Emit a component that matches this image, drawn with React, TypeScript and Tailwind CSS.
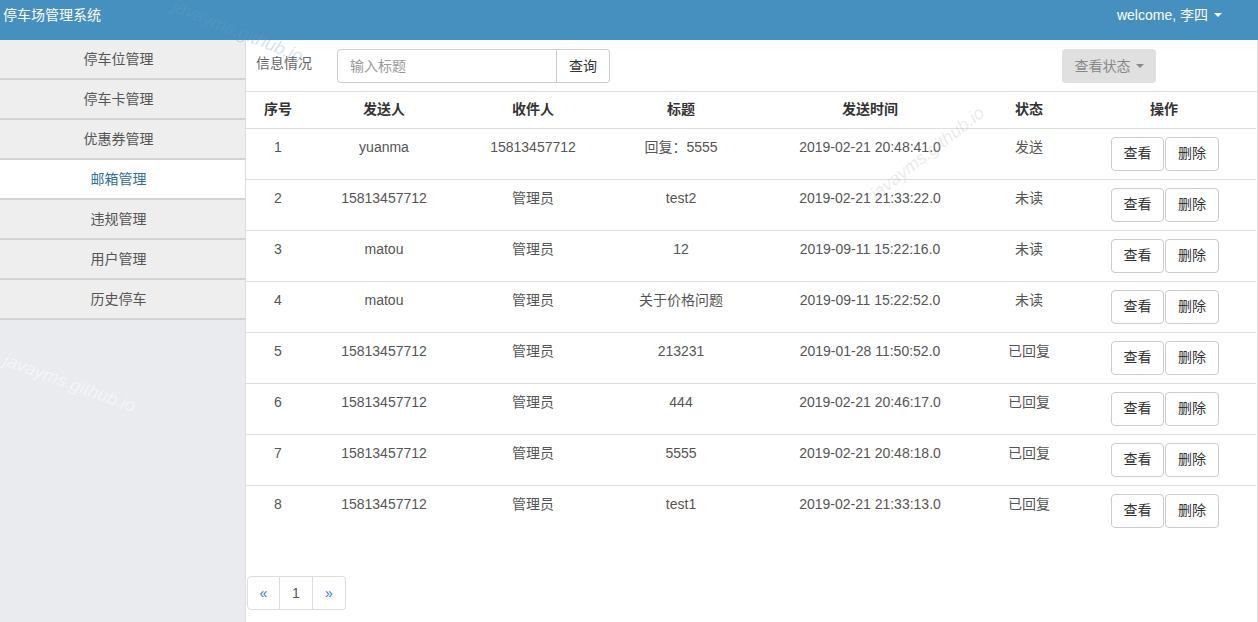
import { useState } from "react";

const MENU = ["停车位管理", "停车卡管理", "优惠券管理", "邮箱管理", "违规管理", "用户管理", "历史停车"];

const ROWS = [
  { id: 1, from: "yuanma", to: "15813457712", title: "回复：5555", time: "2019-02-21 20:48:41.0", status: "发送" },
  { id: 2, from: "15813457712", to: "管理员", title: "test2", time: "2019-02-21 21:33:22.0", status: "未读" },
  { id: 3, from: "matou", to: "管理员", title: "12", time: "2019-09-11 15:22:16.0", status: "未读" },
  { id: 4, from: "matou", to: "管理员", title: "关于价格问题", time: "2019-09-11 15:22:52.0", status: "未读" },
  { id: 5, from: "15813457712", to: "管理员", title: "213231", time: "2019-01-28 11:50:52.0", status: "已回复" },
  { id: 6, from: "15813457712", to: "管理员", title: "444", time: "2019-02-21 20:46:17.0", status: "已回复" },
  { id: 7, from: "15813457712", to: "管理员", title: "5555", time: "2019-02-21 20:48:18.0", status: "已回复" },
  { id: 8, from: "15813457712", to: "管理员", title: "test1", time: "2019-02-21 21:33:13.0", status: "已回复" },
];

const Caret = ({ className = "" }: { className?: string }) => (
  <span
    className={`inline-block w-0 h-0 border-l-[4px] border-r-[4px] border-t-[4px] border-l-transparent border-r-transparent ${className}`}
  />
);

const Sidebar = () => {
  const [active, setActive] = useState(3);
  return (
    <aside className="w-[245px] shrink-0 bg-[#e9ebee]">
      {MENU.map((m, i) => (
        <div
          key={m}
          onClick={() => setActive(i)}
          className={`h-10 flex items-center justify-center pr-2 border-b-2 border-[#d3d3d3] cursor-pointer ${
            i === active ? "bg-white text-[#2f6f9f]" : "bg-[#eeeeee] text-[#555]"
          }`}
        >
          {m}
        </div>
      ))}
    </aside>
  );
};

const Toolbar = () => (
  <div className="h-[52px] flex items-start border-b border-[#ddd] pl-[10px] pt-[9px] pr-[101px]">
    <span className="text-[#666] mt-[4px] w-[81px]">信息情况</span>
    <div className="flex">
      <input
        placeholder="输入标题"
        className="w-[220px] h-[34px] border border-[#ccc] rounded-l-[4px] px-3 text-[14px] text-[#555] placeholder:text-[#999] outline-none"
      />
      <button className="w-[53px] h-[34px] border border-l-0 border-[#ccc] rounded-r-[4px] bg-white text-[#333]">
        查询
      </button>
    </div>
    <button className="ml-auto w-[94px] h-[34px] rounded-[4px] bg-[#e0e0e0] text-[#888] flex items-center justify-center gap-[5px]">
      查看状态
      <Caret className="border-t-[#888]" />
    </button>
  </div>
);

const MailTable = () => (
  <table className="w-[1010px] border-collapse table-fixed">
    <colgroup>
      <col className="w-[64px]" />
      <col className="w-[148px]" />
      <col className="w-[150px]" />
      <col className="w-[146px]" />
      <col className="w-[232px]" />
      <col className="w-[86px]" />
      <col className="w-[184px]" />
    </colgroup>
    <thead>
      <tr className="h-[36px] text-[#333] font-bold">
        {["序号", "发送人", "收件人", "标题", "发送时间", "状态", "操作"].map((h) => (
          <th key={h} className="text-center align-middle font-bold">
            {h}
          </th>
        ))}
      </tr>
    </thead>
    <tbody>
      {ROWS.map((r) => (
        <tr key={r.id} className="h-[51px] border-t border-[#ddd] text-[#555]">
          <td className="text-center align-top pt-[8px] leading-5">{r.id}</td>
          <td className="text-center align-top pt-[8px] leading-5">{r.from}</td>
          <td className="text-center align-top pt-[8px] leading-5">{r.to}</td>
          <td className="text-center align-top pt-[8px] leading-5">{r.title}</td>
          <td className="text-center align-top pt-[8px] leading-5">{r.time}</td>
          <td className="text-center align-top pt-[8px] leading-5">{r.status}</td>
          <td className="align-top pt-[8px]">
            <div className="flex justify-center gap-px pl-[2px]">
              <button className="w-[53px] h-[34px] border border-[#ccc] rounded-[4px] bg-white text-[#333]">查看</button>
              <button className="w-[54px] h-[34px] border border-[#ccc] rounded-[4px] bg-white text-[#333]">删除</button>
            </div>
          </td>
        </tr>
      ))}
    </tbody>
  </table>
);

const Pager = () => (
  <div className="flex mt-[40px] ml-px">
    <span className="w-[33px] h-[34px] border border-[#ddd] rounded-l-[4px] flex items-center justify-center text-[#337ab7]">«</span>
    <span className="w-[33px] h-[34px] border border-l-0 border-[#ddd] flex items-center justify-center text-[#555]">1</span>
    <span className="w-[33px] h-[34px] border border-l-0 border-[#ddd] rounded-r-[4px] flex items-center justify-center text-[#337ab7]">»</span>
  </div>
);

const App = () => (
  <div
    className="relative w-[1258px] h-[622px] overflow-hidden bg-white text-[14px]"
    style={{ fontFamily: '"Liberation Sans", "Noto Sans CJK SC", sans-serif' }}
  >
    <header className="h-10 bg-[#4590bf] text-white flex items-center justify-between pl-[3px] pr-[36px]">
      <span className="-mt-[10px]">停车场管理系统</span>
      <span className="flex items-center gap-[6px] -mt-[10px]">
        welcome, 李四
        <Caret className="border-t-white" />
      </span>
    </header>
    <div className="flex h-[582px]">
      <Sidebar />
      <main className="flex-1 border-l border-r border-[#ddd]">
        <Toolbar />
        <MailTable />
        <Pager />
      </main>
    </div>

    {/* faint watermarks */}
    <span className="absolute left-[168px] top-[18px] rotate-[22deg] text-[18px] italic text-[#6a9ec4]/30 pointer-events-none select-none">
      javayms.github.io
    </span>
    <span className="absolute left-[858px] top-[140px] -rotate-[38deg] text-[18px] italic text-[#bbb]/30 pointer-events-none select-none">
      javayms.github.io
    </span>
    <span className="absolute left-[0px] top-[370px] rotate-[20deg] text-[18px] italic text-white/50 pointer-events-none select-none">
      javayms.github.io
    </span>
  </div>
);

export default App;
